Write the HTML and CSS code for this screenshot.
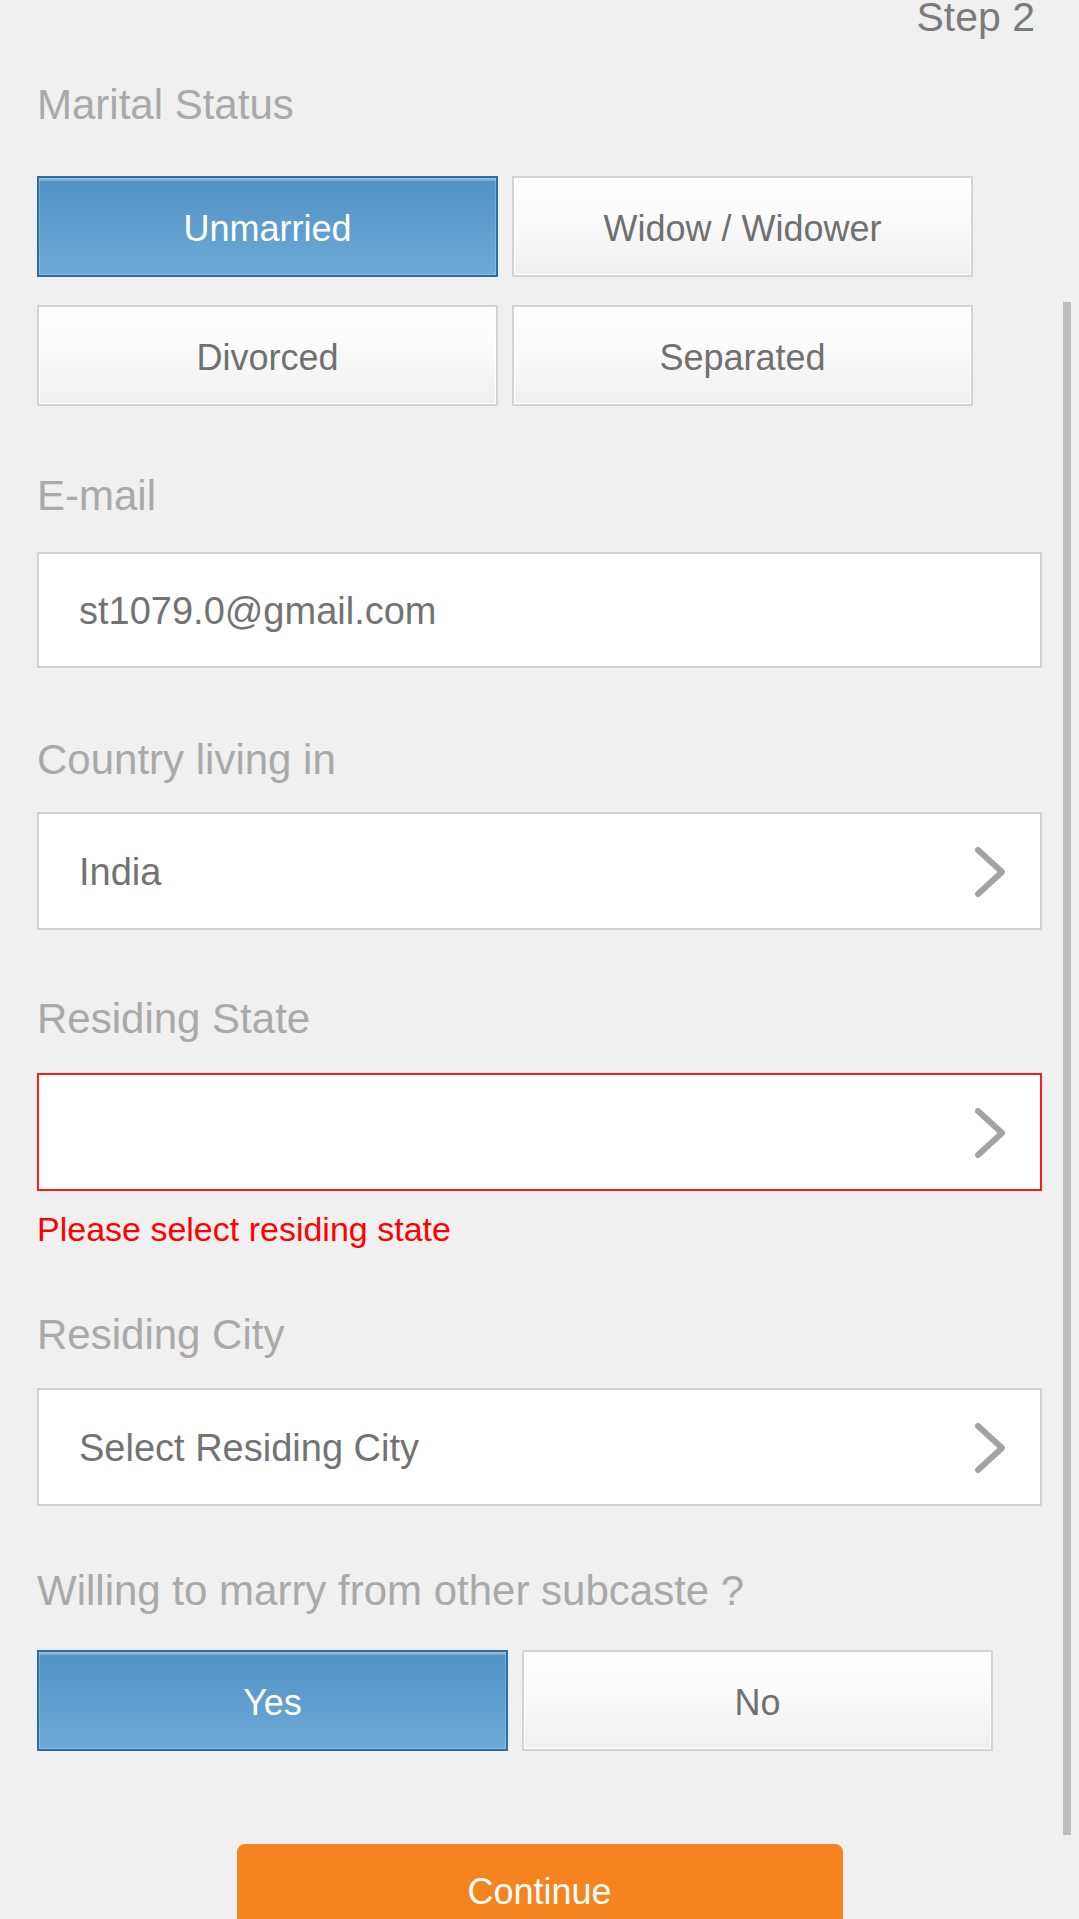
FILE: index.html
```html
<!DOCTYPE html>
<html lang="en">
<head>
<meta charset="utf-8">
<title>Step 2</title>
<link rel="stylesheet" href="styles.css">
</head>
<body>
<div class="page">
  <div class="step-row"><span class="step">Step 2</span></div>

  <form class="form">
    <div class="label label-first">Marital Status</div>
    <div class="choice-grid choice-grid-4">
      <button type="button" class="choice choice-active">Unmarried</button>
      <button type="button" class="choice">Widow / Widower</button>
      <button type="button" class="choice">Divorced</button>
      <button type="button" class="choice">Separated</button>
    </div>

    <div class="label label-email">E-mail</div>
    <div class="field field-email"><span class="field-text">st1079.0@gmail.com</span></div>

    <div class="label label-country">Country living in</div>
    <div class="field field-select field-country">
      <span class="field-text">India</span>
      <svg class="chev" viewBox="0 0 32 50" width="32" height="50"><polyline points="4,3 28,25 4,47" fill="none" stroke="#a3a3a3" stroke-width="6" stroke-linecap="round" stroke-linejoin="round"/></svg>
    </div>

    <div class="label label-state">Residing State</div>
    <div class="field field-select field-error field-state">
      <span class="field-text"></span>
      <svg class="chev" viewBox="0 0 32 50" width="32" height="50"><polyline points="4,3 28,25 4,47" fill="none" stroke="#a3a3a3" stroke-width="6" stroke-linecap="round" stroke-linejoin="round"/></svg>
    </div>
    <div class="error-msg">Please select residing state</div>

    <div class="label label-city">Residing City</div>
    <div class="field field-select">
      <span class="field-text">Select Residing City</span>
      <svg class="chev" viewBox="0 0 32 50" width="32" height="50"><polyline points="4,3 28,25 4,47" fill="none" stroke="#a3a3a3" stroke-width="6" stroke-linecap="round" stroke-linejoin="round"/></svg>
    </div>

    <div class="label label-willing">Willing to marry from other subcaste ?</div>
    <div class="choice-grid choice-grid-2">
      <button type="button" class="choice choice-active">Yes</button>
      <button type="button" class="choice">No</button>
    </div>

    <div class="continue-wrap">
      <button type="button" class="continue">Continue</button>
    </div>
  </form>

  <div class="scrollbar"></div>
</div>
</body>
</html>
```
FILE: styles.css
```css
html, body {
  margin: 0;
  padding: 0;
  height: 1919px;
  overflow: hidden;
  background: #f0f0f0;
}

body {
  font-family: "Liberation Sans", Arial, Helvetica, sans-serif;
}

.page {
  position: relative;
  height: 1919px;
}

.step-row {
  display: flex;
  justify-content: flex-end;
  padding-right: 44px;
  height: 34px;
}

.step {
  font-size: 41px;
  line-height: 34px;
  color: #7b7b7b;
}

.form {
  display: flex;
  flex-direction: column;
  padding-left: 37px;
  width: 1005px;
}

.label {
  font-size: 42px;
  line-height: 50px;
  color: #a9a9a9;
}

.label-first { margin-top: 46px; }
.label-email { margin-top: 65px; }
.label-country { margin-top: 67px; }
.label-state { margin-top: 64px; }
.label-city { margin-top: 61px; }
.label-willing { margin-top: 60px; }

.choice-grid {
  display: grid;
  margin-top: 46px;
}

.choice-grid-4 {
  grid-template-columns: 461px 461px;
  grid-auto-rows: 101px;
  column-gap: 14px;
  row-gap: 28px;
}

.choice-grid-2 {
  margin-top: 34px;
  grid-template-columns: 471px 471px;
  grid-auto-rows: 101px;
  column-gap: 14px;
}

.choice {
  box-sizing: border-box;
  margin: 0;
  padding: 5px 0 0 0;
  font-family: inherit;
  font-size: 36px;
  line-height: 42px;
  color: #707070;
  border: 2px solid #d3d3d3;
  background: linear-gradient(to bottom, #ffffff 0%, #fbfbfb 40%, #efefef 100%);
  box-shadow: inset 0 0 0 1px #ffffff;
  border-radius: 0;
  text-align: center;
}

.choice-active {
  color: #ffffff;
  border-color: #2b6ea6;
  background: linear-gradient(to bottom, #5192c4 0%, #5d9ccc 45%, #6eaad7 100%);
  box-shadow: inset 0 0 0 1px rgba(255, 255, 255, 0.22), inset 0 3px 0 rgba(255, 255, 255, 0.28);
}

.field {
  box-sizing: border-box;
  display: flex;
  align-items: center;
  justify-content: space-between;
  width: 1005px;
  height: 118px;
  margin-top: 28px;
  padding: 2px 34px 0 40px;
  background: #ffffff;
  border: 2px solid #d2d2d2;
}

.field-email {
  height: 116px;
  margin-top: 31px;
}

.field-country { margin-top: 27px; }
.field-state { margin-top: 29px; }

.field-text {
  font-size: 38px;
  line-height: 44px;
  color: #737373;
}

.field-error {
  border-color: #ff1a1a;
}

.chev {
  display: block;
  filter: blur(0.6px);
}

.error-msg {
  margin-top: 18px;
  font-size: 34px;
  line-height: 40px;
  color: #ff0000;
}

.continue-wrap {
  display: flex;
  justify-content: center;
  width: 1079px;
  margin-left: -37px;
  margin-top: 93px;
}

.continue {
  width: 606px;
  height: 96px;
  margin: 0;
  padding: 0;
  border: none;
  border-radius: 8px 8px 0 0;
  background: #f48320;
  color: #ffffff;
  font-family: inherit;
  font-size: 36px;
  line-height: 42px;
}

.scrollbar {
  position: absolute;
  left: 1063px;
  top: 302px;
  width: 8px;
  height: 1533px;
  background: #bdbdbd;
}
```
